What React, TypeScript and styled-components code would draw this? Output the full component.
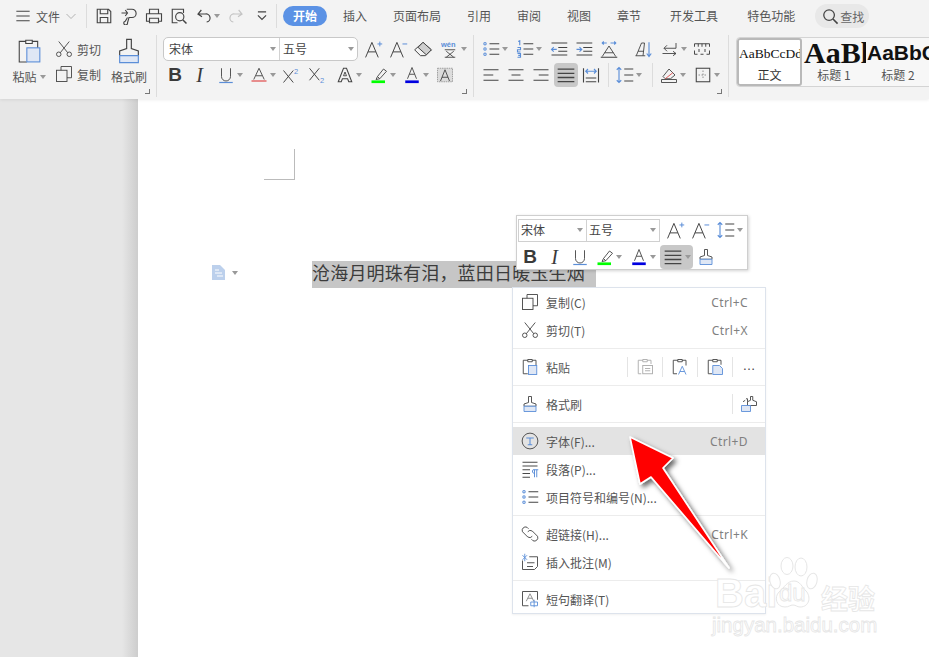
import React from "react";
import styled, { createGlobalStyle } from "styled-components";

const D = "#444444";
const B = "#5b8ed8";
const L = "#dfe7f5";
const UI = `"Noto Sans CJK SC", "Noto Sans", sans-serif`;

const Global = createGlobalStyle`
  html, body { margin: 0; padding: 0; background: #fff; }
  * { box-sizing: border-box; }
  body { font-family: ${UI}; font-size: 12px; color: #555; }
`;

const Page = styled.div`
  position: relative;
  width: 929px;
  height: 657px;
  overflow: hidden;
  display: flex;
  flex-direction: column;
`;
const Ribbon = styled.header`
  height: 99px;
  flex: none;
  background: #f3f3f3;
  position: relative;
  z-index: 1;
  box-shadow: 0 1px 3px rgba(0, 0, 0, 0.08);
`;
const TabBar = styled.nav`
  height: 32px;
  margin-bottom: 1px;
  display: flex;
  align-items: center;
  padding-left: 16px;
`;
const FileMenu = styled.div`
  display: flex;
  align-items: center;
  width: 70px;
  gap: 5px;
  margin-left: -1px;
  margin-right: 1px;
  color: #555;
`;
const VSep = styled.span<{ $h?: number; $ml?: number; $mr?: number }>`
  width: 1px;
  height: ${(p) => p.$h ?? 24}px;
  background: #dcdcdc;
  flex: none;
  margin-left: ${(p) => p.$ml ?? 0}px;
  margin-right: ${(p) => p.$mr ?? 0}px;
`;
const Tab = styled.span<{ $active?: boolean; $gap?: number }>`
  flex: none;
  line-height: 20px;
  height: 20px;
  padding: 0 ${(p) => (p.$active ? 10 : 0)}px;
  margin-right: ${(p) => p.$gap ?? 26}px;
  border-radius: 10px;
  background: ${(p) => (p.$active ? "#5b92e5" : "transparent")};
  color: ${(p) => (p.$active ? "#fff" : "#555")};
  font-weight: ${(p) => (p.$active ? 700 : 400)};
`;
const SearchPill = styled.span`
  display: flex;
  align-items: center;
  gap: 1px;
  height: 24px;
  width: 54px;
  padding-left: 7px;
  margin-left: -6px;
  border-radius: 12px;
  background: #e8e8e8;
  color: #666;
`;
const ToolArea = styled.div`
  height: 66px;
  display: flex;
`;
const Group = styled.section<{ $w: number; $pl?: number; $border?: boolean }>`
  position: relative;
  flex: none;
  width: ${(p) => p.$w}px;
  padding-left: ${(p) => p.$pl ?? 0}px;
  padding-top: 2px;
  margin-top: 2px;
  height: 62px;
  border-right: ${(p) => (p.$border === false ? "none" : "1px solid #dcdcdc")};
`;
const Launcher = styled.i`
  position: absolute;
  right: 6px;
  bottom: 3px;
  width: 5px;
  height: 5px;
  border-right: 1px solid #777;
  border-bottom: 1px solid #777;
`;
const ToolRow = styled.div<{ $mb?: number }>`
  display: flex;
  align-items: center;
  height: 24px;
  margin-bottom: ${(p) => p.$mb ?? 2}px;
`;
const Tool = styled.span<{ $w: number; $ml?: number; $active?: boolean }>`
  flex: none;
  display: flex;
  align-items: center;
  justify-content: center;
  gap: 2px;
  height: 24px;
  width: ${(p) => p.$w}px;
  margin-left: ${(p) => p.$ml ?? 0}px;
  border-radius: 4px;
  background: ${(p) => (p.$active ? "#c8c8c8" : "transparent")};
`;
const Caret = styled.i`
  flex: none;
  width: 0;
  height: 0;
  border-left: 3.5px solid transparent;
  border-right: 3.5px solid transparent;
  border-top: 4px solid #999;
`;
const Letter = styled.span<{ $italic?: boolean }>`
  display: block;
  width: 18px;
  text-align: center;
  font-family: ${(p) => (p.$italic ? `"Liberation Serif"` : `"Liberation Sans"`)}, sans-serif;
  color: #3a3a3a;
  font-size: ${(p) => (p.$italic ? 20 : 19)}px;
  line-height: 22px;
  font-weight: ${(p) => (p.$italic ? 400 : 700)};
  font-style: ${(p) => (p.$italic ? "italic" : "normal")};
`;
const ClipLayout = styled.div`
  display: flex;
  padding-left: 10px;
`;
const ClipColumn = styled.div<{ $w: number; $ml?: number }>`
  width: ${(p) => p.$w}px;
  margin-left: ${(p) => p.$ml ?? 0}px;
  height: 49px;
  display: flex;
  flex-direction: column;
  align-items: center;
  justify-content: space-between;
`;
const ClipLabel = styled.span`
  display: flex;
  align-items: center;
  gap: 3px;
  line-height: 18px;
  white-space: nowrap;
`;
const ClipRow = styled.div`
  display: flex;
  align-items: center;
  gap: 4px;
  height: 24px;
  white-space: nowrap;
`;
const SelectBox = styled.div`
  display: flex;
  width: 195px;
  height: 24px;
  background: #fff;
  border: 1px solid #c8c8c8;
  border-radius: 5px;
`;
const SelectPart = styled.div<{ $w: number; $border?: boolean; $pl?: number }>`
  flex: none;
  display: flex;
  align-items: center;
  justify-content: space-between;
  width: ${(p) => p.$w}px;
  padding: 0 3px 1px ${(p) => p.$pl ?? 5}px;
  color: #444;
  border-right: ${(p) => (p.$border ? "1px solid #d2d2d2" : "none")};
`;
const Gallery = styled.div`
  display: flex;
  width: 200px;
  height: 50px;
  background: #f7f7f7;
  border: 1px solid #d4d4d4;
  border-radius: 4px 0 0 4px;
  overflow: hidden;
`;
const StyleCard = styled.div<{ $active?: boolean }>`
  flex: none;
  width: ${(p) => (p.$active ? 65 : 64)}px;
  height: 100%;
  overflow: hidden;
  display: flex;
  flex-direction: column;
  align-items: ${(p) => (p.$active ? "flex-start" : "center")};
  border: ${(p) => (p.$active ? "2px solid #b9b9b9" : "none")};
  border-radius: 3px;
  background: ${(p) => (p.$active ? "#fff" : "transparent")};
`;
const Sample = styled.div<{ $kind: "normal" | "h1" | "h2" }>`
  height: ${(p) => (p.$kind === "normal" ? 26 : 28)}px;
  line-height: ${(p) => (p.$kind === "normal" ? 28 : 30)}px;
  white-space: nowrap;
  color: #111;
  align-self: flex-start;
  font-family: ${(p) => (p.$kind === "h2" ? `"Liberation Sans"` : `"Liberation Serif"`)}, serif;
  font-size: ${(p) => (p.$kind === "normal" ? 13.5 : p.$kind === "h1" ? 30 : 21)}px;
  font-weight: ${(p) => (p.$kind === "normal" ? 400 : 700)};
  padding-left: ${(p) => (p.$kind === "h1" ? 2 : p.$kind === "h2" ? 1 : 0)}px;
`;
const StyleName = styled.div<{ $active?: boolean }>`
  align-self: center;
  font-size: 12px;
  line-height: 18px;
  color: ${(p) => (p.$active ? "#333" : "#555")};
`;

const Workspace = styled.main`
  flex: 1;
  display: flex;
  min-height: 0;
`;
const Sidebar = styled.aside`
  width: 138px;
  flex: none;
  background: linear-gradient(to right, #e6e6e6 0, #e6e6e6 122px, #cdcdcd 138px);
`;
const Paper = styled.div`
  flex: 1;
  background: #fff;
  padding-top: 50px;
`;
const CropMark = styled.div`
  width: 31px;
  height: 31px;
  margin-left: 126px;
  border-right: 1px solid #bbb;
  border-bottom: 1px solid #bbb;
`;
const DocLine = styled.div`
  display: flex;
  align-items: center;
  margin-top: 81px;
  margin-left: 74px;
  height: 27px;
`;
const DocMark = styled.div`
  width: 100px;
  margin-top: -4px;
  display: flex;
  align-items: center;
  gap: 7px;
`;
const Selected = styled.span`
  width: 284px;
  height: 27px;
  line-height: 23px;
  background: #c6c6c6;
  color: #3c3c3c;
  font-size: 18px;
  letter-spacing: 0.2px;
  white-space: nowrap;
`;

const MiniBar = styled.div`
  position: absolute;
  left: 516px;
  top: 215px;
  width: 232px;
  height: 55px;
  background: #fff;
  border: 1px solid #cfcfcf;
  box-shadow: 1px 1px 3px rgba(0, 0, 0, 0.18);
  padding: 2px 1px;
  z-index: 2;
`;
const MiniSelects = styled.div`
  display: flex;
  width: 142px;
  height: 23px;
  border: 1px solid #d0d0d0;
  flex: none;
`;
const Menu = styled.div`
  position: absolute;
  left: 512px;
  top: 287px;
  width: 254px;
  height: 327px;
  background: #fff;
  border: 1px solid #dde3ec;
  box-shadow: 0 1px 2px rgba(0, 0, 0, 0.06);
  z-index: 2;
`;
const MenuRow = styled.div<{ $hover?: boolean }>`
  display: flex;
  align-items: center;
  height: 28px;
  padding: 0 17px 0 7px;
  background: ${(p) => (p.$hover ? "#e3e3e3" : "transparent")};
  color: #555;
  white-space: nowrap;
`;
const MenuIcon = styled.span`
  flex: none;
  width: 19px;
  margin-right: 7px;
  display: flex;
  justify-content: center;
`;
const MenuText = styled.span`
  flex: 1;
`;
const Shortcut = styled.span`
  color: #808080;
  letter-spacing: 0.4px;
  font-family: "Noto Sans", sans-serif;
`;
const MenuSep = styled.div<{ $h?: number }>`
  height: ${(p) => p.$h ?? 9}px;
  display: flex;
  align-items: center;
  &::before {
    content: "";
    flex: 1;
    height: 1px;
    background: #ececec;
  }
`;
const InlineCell = styled.span<{ $w?: number }>`
  flex: none;
  width: ${(p) => p.$w ?? 35}px;
  height: 20px;
  display: flex;
  align-items: center;
  justify-content: center;
  border-left: 1px solid #e4e4e4;
`;
const RightCells = styled.span`
  display: flex;
  margin-right: -17px;
`;
const Dots = styled.span`
  color: #444;
  font-family: "Liberation Sans", sans-serif;
  font-size: 13px;
  line-height: 12px;
  margin-top: -2px;
`;
const ArrowLayer = styled.svg`
  position: absolute;
  left: 610px;
  top: 425px;
  z-index: 3;
  overflow: visible;
`;
const Watermark = styled.div`
  position: absolute;
  left: 712px;
  top: 555px;
  width: 172px;
  z-index: 3;
`;
const MarkRow = styled.div`
  display: flex;
  align-items: flex-end;
  height: 60px;
`;
const outline = `
  color: #fff;
  -webkit-text-stroke: 0.8px #e6e6e6;
  font-family: "Liberation Sans", sans-serif;
  font-weight: 700;
  white-space: nowrap;
`;
const BaiText = styled.span`
  ${outline}
  font-size: 40px;
  line-height: 44px;
  margin-left: 3px;
  width: 54px;
  flex: none;
`;
const Paw = styled.div`
  position: relative;
  width: 50px;
  height: 56px;
  margin-bottom: 2px;
  flex: none;
`;
const DuText = styled.span`
  ${outline}
  position: absolute;
  left: 10px;
  top: 23px;
  font-size: 24px;
  line-height: 26px;
  font-weight: 400;
`;
const JingText = styled.span`
  ${outline}
  font-family: ${UI};
  font-size: 27px;
  line-height: 34px;
  margin-left: 2px;
`;
const UrlText = styled.div`
  ${outline}
  font-size: 20.5px;
  line-height: 24px;
  margin-top: -2px;
  font-weight: 400;
`;

const Svg = styled.svg`
  flex: none;
  display: block;
`;
type IP = { s?: number; sw?: number; children: React.ReactNode };
const Ico = ({ s = 18, sw = 1.2, children }: IP) => (
  <Svg width={s} height={s} viewBox="0 0 24 24" fill="none" stroke={D} strokeWidth={sw}>
    {children}
  </Svg>
);

const A = <path d="M2 22 10 3l8 19M5 15h10" />;
const Lines = ({ d }: { d: string }) => <path d={d} strokeWidth={1.6} />;

const I = {
  menu: <Ico s={16}><path d="M2 5h20M2 12h20M2 19h20" strokeWidth={1.6} /></Ico>,
  chevron: <Ico s={12}><path d="M3 8l9 9 9-9" stroke="#aaa" strokeWidth={1.8} /></Ico>,
  save: <Ico s={18}><path d="M3 3h15l3 3v15H3zM7 3v6h10V3M7 21v-7h10v7" strokeWidth={1.5} /></Ico>,
  exportP: <Ico s={18}><path d="M2 8h8M7 4l3 4-3 4M9 3h7a5 5 0 0 1 0 11h-4l-2 7a2.5 2.5 0 1 1-3-2l3-5" strokeWidth={1.5} /></Ico>,
  print: <Ico s={18}><path d="M6 9V3h12v6M6 19H2V9h20v10h-4M6 15h12v6H6z" strokeWidth={1.5} /></Ico>,
  preview: <Ico s={18}><path d="M10 21H3V3h15v5" strokeWidth={1.5} /><circle cx="13" cy="13" r="5.5" strokeWidth={1.5} /><path d="M17 17l5 5" strokeWidth={2} /></Ico>,
  undo: <Ico s={16}><path d="M8 3 3 9l6 4M3 9h11a6 6 0 0 1 2 12" strokeWidth={1.8} /></Ico>,
  redo: <Ico s={16}><path d="M16 3l5 6-6 4M21 9H10a6 6 0 0 0-2 12" stroke="#c4c4c4" strokeWidth={1.8} /></Ico>,
  more: <Ico s={14}><path d="M5 5h14M5 11l7 7 7-7" strokeWidth={2} /></Ico>,
  search: <Ico s={17}><circle cx="10" cy="10" r="7.5" strokeWidth={1.8} /><path d="M15.5 15.5 22 22" strokeWidth={2.2} /></Ico>,
  paste: <Ico s={26} sw={1}><path d="M9 3h6v3H9zM9 4H3v19h7M15 4h5v7" /><rect x="10" y="10" width="12" height="13" fill={L} stroke={B} /></Ico>,
  pasteS: <Ico s={18}><path d="M9 2h6v3H9zM9 3H3v18h6M15 3h5v7" /><rect x="10" y="10" width="11" height="12" fill={L} stroke={B} /></Ico>,
  cut: <Ico s={18}><circle cx="5" cy="19" r="3" /><circle cx="19" cy="19" r="3" /><path d="M7 17 19 2M17 17 5 2" /></Ico>,
  copy: <Ico s={18}><path d="M8 7V2h14v15h-6" /><rect x="2" y="7" width="14" height="15" /></Ico>,
  brush: <Ico s={28} sw={1}><path d="M10 2h4v8l6 2v4H4v-4l6-2z" /><path d="M4 16h16v6H4z" fill={L} stroke={B} /></Ico>,
  brushS: <Ico s={18}><path d="M10 2h4v8l6 2v3H4v-3l6-2z" /><path d="M4 15h16v7H4z" fill={L} stroke={B} /></Ico>,
  brush2: <Ico s={18}><path d="M14 2h3v5l5 2v5H10V9l4-2z" /><path d="M8 5h2v4M4 9l3-2" /><path d="M2 14h12v8H2z" fill={L} stroke={B} /></Ico>,
  aPlus: <Ico s={19} sw={1.25}>{A}<path d="M17 5h6M20 2v6" stroke={B} /></Ico>,
  aMinus: <Ico s={19} sw={1.25}>{A}<path d="M17 5h6" stroke={B} /></Ico>,
  eraser: <Ico s={20}><path d="M2 13 12 4l10 9-7 7H9z" /><path d="M12 4l10 9-6 6-10-9z" fill="#cfcfcf" /></Ico>,
  wen: (
    <Svg width="18" height="18" viewBox="0 0 24 24" fill="none">
      <text x="0" y="9" fontSize="10" fontFamily="Liberation Sans" fill={B} fontWeight="700">wén</text>
      <path d="M5 13h14M7 15l10 8M17 15 7 23M5 23h14" stroke={D} strokeWidth="1.2" />
    </Svg>
  ),
  under: <Ico><path d="M6 3v11a6 6 0 0 0 12 0V3" /><path d="M3 22h18" stroke={B} strokeWidth={1.6} /></Ico>,
  fontRed: <Ico><path d="M5 18 12 3l7 15M8 13h8" /><path d="M2 20h20" stroke="#e04848" strokeWidth={1.6} /></Ico>,
  sup: (
    <Svg width="20" height="18" viewBox="0 0 26 24" fill="none">
      <path d="M3 6l13 16M16 6 3 22" stroke={D} strokeWidth="1.3" />
      <text x="17" y="10" fontSize="10" fontFamily="Liberation Sans" fill={B}>2</text>
    </Svg>
  ),
  sub: (
    <Svg width="20" height="18" viewBox="0 0 26 24" fill="none">
      <path d="M3 3l13 16M16 3 3 19" stroke={D} strokeWidth="1.3" />
      <text x="17" y="23" fontSize="10" fontFamily="Liberation Sans" fill={B}>2</text>
    </Svg>
  ),
  outlineA: <Ico><path d="M3 21 10 3h4l7 18h-4l-1.5-4h-7L7 21z" strokeWidth={1.4} /><path d="M10 13h4l-2-5z" /></Ico>,
  high: <Ico><path d="M10 14l8-10 4 3-9 10zM10 14l-2 4 5-1" /><path d="M2 21h18" stroke="#00ff00" strokeWidth={3.6} /></Ico>,
  color: <Ico><path d="M6 17 12 2l6 15M8.5 11h7" /><path d="M3 21h18" stroke="#0000e0" strokeWidth={3.6} /></Ico>,
  shade: <Ico><rect x="2" y="3" width="20" height="18" fill="#dcdcdc" stroke="#999" strokeDasharray="2 1" /><path d="M6 20 12 5l6 15M8 15h8" /></Ico>,
  bullets: <Ico><path d="M10 5h13M10 12h13M10 19h13" strokeWidth={1.5} /><g stroke={B} strokeWidth={1.4}><circle cx="4" cy="5" r="1.6" /><circle cx="4" cy="12" r="1.6" /><circle cx="4" cy="19" r="1.6" /></g></Ico>,
  numbers: <Ico><path d="M10 5h13M10 12h13M10 19h13" strokeWidth={1.5} /><g stroke={B} strokeWidth={1.5}><path d="M3 2l2-1v6M2 10h4v3H2v3h4M2 18h4v5H2M3 20.5h3" /></g></Ico>,
  outdent: <Ico><path d="M2 4h21M11 10h12M11 15h12M2 20h21" strokeWidth={1.5} /><path d="M9 12.5H2M5 9.5l-3 3 3 3" stroke={B} strokeWidth={1.5} /></Ico>,
  indent: <Ico><path d="M2 4h21M11 10h12M11 15h12M2 20h21" strokeWidth={1.5} /><path d="M2 12.5h7M6 9.5l3 3-3 3" stroke={B} strokeWidth={1.5} /></Ico>,
  ltr: <Ico><path d="M3 4h6M5 2 3 4l2 2M14 4h7M19 2l2 2-2 2" stroke={B} strokeWidth={1.5} /><path d="M3 22l9-14 9 14M6 17h12" /><path d="M1 23h22" strokeWidth={1.4} /></Ico>,
  sort: <Ico><path d="M3 21 10 4h4l-2 17M5.5 15H13M2 21h13" /><path d="M20 3v19M17 18l3 4 3-4" stroke={B} strokeWidth={1.5} /></Ico>,
  wrap: <Ico><path d="M20 4v7H4M8 7l-4 4 4 4" /><path d="M2 18h18M16 15l4 3-4 3" /></Ico>,
  ruler: <Ico><path d="M2 5h20M2 19h4M10 19h4M18 19h4M2 5v4M22 5v4M2 14v5M22 14v5M7 5v4M12 5v4M17 5v4M8 12v4M16 12v4" strokeWidth={1.3} /></Ico>,
  alignL: <Ico><Lines d="M2 5h20M2 12h13M2 19h20" /></Ico>,
  alignC: <Ico><Lines d="M2 5h20M6 12h12M2 19h20" /></Ico>,
  alignR: <Ico><Lines d="M2 5h20M9 12h13M2 19h20" /></Ico>,
  justify: <Ico s={20}><Lines d="M2 5h20M2 10h20M2 15h20M2 20h20" /></Ico>,
  distrib: <Ico><path d="M2 3v19M22 3v19M5 16h14M5 21h14" strokeWidth={1.5} /><path d="M5 7h14M8 4 5 7l3 3M16 4l3 3-3 3" stroke={B} strokeWidth={1.5} /></Ico>,
  spacing: <Ico><path d="M4 2v20M1 5l3-3 3 3M1 19l3 3 3-3" stroke={B} strokeWidth={1.5} /><path d="M11 4h12M11 12h12M11 20h12" strokeWidth={1.5} /></Ico>,
  fill: <Ico><path d="M4 14l8-10 8 8-6 5H7z" /><path d="M7 17 17 9" stroke="#e04848" /><path d="M2 18h20v4H2z" /></Ico>,
  border: <Ico><rect x="3" y="3" width="18" height="18" strokeWidth={1.4} /><path d="M12 6v12M6 12h12" strokeDasharray="2 2" stroke="#888" /></Ico>,
  docMark: (
    <Svg width="13" height="15" viewBox="0 0 13 15">
      <path d="M0 0h8l5 5v10H0z" fill="#bcd0ec" />
      <path d="M3 5h4M3 8h7M5 11h6" stroke="#fff" strokeWidth="1" />
    </Svg>
  ),
  fontT: <Ico><circle cx="12" cy="12" r="10.5" /><path d="M7 8h10M12 8v9M9 17h6" stroke={B} strokeWidth={1.4} /></Ico>,
  para: <Ico><path d="M2 3h20M2 8h20M2 13h10M2 18h10M2 23h10" strokeWidth={1.3} /><path d="M18 13v10M21 13v10M18 18a3 3 0 0 1-2-5h7" stroke={B} strokeWidth={1.3} /></Ico>,
  link: <Ico><path d="M10 5l-2-2a4.5 4.5 0 0 0-6 6l7 7a4.5 4.5 0 0 0 6-1" /><path d="M14 19l2 2a4.5 4.5 0 0 0 6-6l-7-7a4.5 4.5 0 0 0-6 1" /></Ico>,
  note: <Ico><path d="M2 10v12h16l4-4V5H11" /><path d="M8 13h10M8 18h8" /><path d="M2 3l6 6M8 3 2 9M5 1v10" stroke={B} /></Ico>,
  trans: <Ico><path d="M10 21H2V2h20v11" /><path d="M7 15l5-10 5 10M9 11h6" stroke="#888" /><path d="M13 16h9v5h-9zM17.5 13v10" stroke={B} /></Ico>,
  pasteText: <Ico><path d="M9 2h6v3H9zM9 3H3v18h4M15 3h5v5" stroke="#aaa" /><rect x="9" y="10" width="13" height="11" stroke="#aaa" /><path d="M12 14h7M12 17h7" stroke="#aaa" /></Ico>,
  pasteA: <Ico><path d="M9 2h6v3H9zM9 3H3v18h5M15 3h5v7" /><path d="M10 22l5-11 5 11M12 18h6" stroke={B} /></Ico>,
  pasteDoc: <Ico><path d="M9 2h6v3H9zM9 3H3v18h5M15 3h5v6" /><path d="M9 10h9l4 4v8H9z" fill={L} stroke={B} /></Ico>,
};

const tabs: { label: string; gap?: number }[] = [
  { label: "插入" },
  { label: "页面布局" },
  { label: "引用" },
  { label: "审阅" },
  { label: "视图" },
  { label: "章节", gap: 29 },
  { label: "开发工具", gap: 29 },
  { label: "特色功能" },
];

export default function App() {
  return (
    <Page>
      <Global />
      <Ribbon>
        <TabBar>
          <FileMenu>{I.menu}<span>文件</span>{I.chevron}</FileMenu>
          <VSep />
          <Tool $w={25} $ml={4}>{I.save}</Tool>
          <Tool $w={25}>{I.exportP}</Tool>
          <Tool $w={25}>{I.print}</Tool>
          <Tool $w={25}>{I.preview}</Tool>
          <Tool $w={33}>{I.undo}<Caret /></Tool>
          <Tool $w={24}>{I.redo}</Tool>
          <Tool $w={28}>{I.more}</Tool>
          <VSep $mr={6} />
          <Tab $active $gap={16}>开始</Tab>
          {tabs.map((t) => <Tab key={t.label} $gap={t.gap}>{t.label}</Tab>)}
          <SearchPill>{I.search}<span>查找</span></SearchPill>
        </TabBar>
        <ToolArea>
          <Group $w={157}>
            <ClipLayout>
              <ClipColumn $w={38}>
                {I.paste}
                <ClipLabel>粘贴<Caret /></ClipLabel>
              </ClipColumn>
              <ClipColumn $w={46} $ml={7}>
                <ClipRow>{I.cut}<span>剪切</span></ClipRow>
                <ClipRow>{I.copy}<span>复制</span></ClipRow>
              </ClipColumn>
              <ClipColumn $w={38} $ml={9}>
                {I.brush}
                <ClipLabel>格式刷</ClipLabel>
              </ClipColumn>
            </ClipLayout>
            <Launcher />
          </Group>
          <Group $w={317} $pl={6}>
            <ToolRow>
              <SelectBox>
                <SelectPart $w={116} $border>宋体<Caret /></SelectPart>
                <SelectPart $w={77} $pl={3}>五号<Caret /></SelectPart>
              </SelectBox>
              <Tool $w={30}>{I.aPlus}</Tool>
              <Tool $w={20}>{I.aMinus}</Tool>
              <Tool $w={30}>{I.eraser}</Tool>
              <Tool $w={31}>{I.wen}<Caret /></Tool>
            </ToolRow>
            <ToolRow>
              <Tool $w={24}><Letter>B</Letter></Tool>
              <Tool $w={25}><Letter $italic>I</Letter></Tool>
              <Tool $w={35}>{I.under}<Caret /></Tool>
              <Tool $w={31}>{I.fontRed}<Caret /></Tool>
              <Tool $w={26}>{I.sup}</Tool>
              <Tool $w={26}>{I.sub}</Tool>
              <Tool $w={37}>{I.outlineA}<Caret /></Tool>
              <Tool $w={31}>{I.high}<Caret /></Tool>
              <Tool $w={35}>{I.color}<Caret /></Tool>
              <Tool $w={24}>{I.shade}</Tool>
            </ToolRow>
            <Launcher />
          </Group>
          <Group $w={255} $pl={7}>
            <ToolRow>
              <Tool $w={27}>{I.bullets}<Caret /></Tool>
              <Tool $w={41}>{I.numbers}<Caret /></Tool>
              <Tool $w={20}>{I.outdent}</Tool>
              <Tool $w={30}>{I.indent}</Tool>
              <Tool $w={20}>{I.ltr}</Tool>
              <Tool $w={24} $ml={12}>{I.sort}</Tool>
              <Tool $w={37}>{I.wrap}<Caret /></Tool>
              <Tool $w={20}>{I.ruler}</Tool>
            </ToolRow>
            <ToolRow>
              <Tool $w={20}>{I.alignL}</Tool>
              <Tool $w={30}>{I.alignC}</Tool>
              <Tool $w={20}>{I.alignR}</Tool>
              <Tool $w={24} $ml={3} $active>{I.justify}</Tool>
              <Tool $w={26}>{I.distrib}</Tool>
              <VSep $ml={4} />
              <Tool $w={39}>{I.spacing}<Caret /></Tool>
              <VSep $ml={4} />
              <Tool $w={39}>{I.fill}<Caret /></Tool>
              <Tool $w={29}>{I.border}<Caret /></Tool>
            </ToolRow>
            <Launcher />
          </Group>
          <Group $w={200} $pl={7} $border={false}>
            <Gallery>
              <StyleCard $active>
                <Sample $kind="normal">AaBbCcDd</Sample>
                <StyleName $active>正文</StyleName>
              </StyleCard>
              <StyleCard>
                <Sample $kind="h1">AaBl</Sample>
                <StyleName>标题 1</StyleName>
              </StyleCard>
              <StyleCard>
                <Sample $kind="h2">AaBbC</Sample>
                <StyleName>标题 2</StyleName>
              </StyleCard>
            </Gallery>
          </Group>
        </ToolArea>
      </Ribbon>
      <Workspace>
        <Sidebar />
        <Paper>
          <CropMark />
          <DocLine>
            <DocMark>{I.docMark}<Caret /></DocMark>
            <Selected>沧海月明珠有泪，蓝田日暖玉生烟</Selected>
          </DocLine>
        </Paper>
      </Workspace>

      <MiniBar>
        <ToolRow $mb={3}>
          <MiniSelects>
            <SelectPart $w={68} $border $pl={2}>宋体<Caret /></SelectPart>
            <SelectPart $w={72} $pl={2}>五号<Caret /></SelectPart>
          </MiniSelects>
          <Tool $w={30}>{I.aPlus}</Tool>
          <Tool $w={20}>{I.aMinus}</Tool>
          <Tool $w={34} $ml={3}>{I.spacing}<Caret /></Tool>
        </ToolRow>
        <ToolRow>
          <Tool $w={24}><Letter>B</Letter></Tool>
          <Tool $w={25}><Letter $italic>I</Letter></Tool>
          <Tool $w={25}>{I.under}</Tool>
          <Tool $w={34}>{I.high}<Caret /></Tool>
          <Tool $w={34}>{I.color}<Caret /></Tool>
          <Tool $w={33} $active>{I.justify}<Caret /></Tool>
          <Tool $w={26}>{I.brushS}</Tool>
        </ToolRow>
      </MiniBar>

      <Menu>
        <MenuRow><MenuIcon>{I.copy}</MenuIcon><MenuText>复制(C)</MenuText><Shortcut>Ctrl+C</Shortcut></MenuRow>
        <MenuRow><MenuIcon>{I.cut}</MenuIcon><MenuText>剪切(T)</MenuText><Shortcut>Ctrl+X</Shortcut></MenuRow>
        <MenuSep />
        <MenuRow>
          <MenuIcon>{I.pasteS}</MenuIcon><MenuText>粘贴</MenuText>
          <RightCells>
            <InlineCell>{I.pasteText}</InlineCell>
            <InlineCell>{I.pasteA}</InlineCell>
            <InlineCell>{I.pasteDoc}</InlineCell>
            <InlineCell $w={33}><Dots>…</Dots></InlineCell>
          </RightCells>
        </MenuRow>
        <MenuSep />
        <MenuRow>
          <MenuIcon>{I.brushS}</MenuIcon><MenuText>格式刷</MenuText>
          <RightCells><InlineCell $w={33}>{I.brush2}</InlineCell></RightCells>
        </MenuRow>
        <MenuSep />
        <MenuRow $hover><MenuIcon>{I.fontT}</MenuIcon><MenuText>字体(F)...</MenuText><Shortcut>Ctrl+D</Shortcut></MenuRow>
        <MenuRow><MenuIcon>{I.para}</MenuIcon><MenuText>段落(P)...</MenuText></MenuRow>
        <MenuRow><MenuIcon>{I.bullets}</MenuIcon><MenuText>项目符号和编号(N)...</MenuText></MenuRow>
        <MenuSep />
        <MenuRow><MenuIcon>{I.link}</MenuIcon><MenuText>超链接(H)...</MenuText><Shortcut>Ctrl+K</Shortcut></MenuRow>
        <MenuRow><MenuIcon>{I.note}</MenuIcon><MenuText>插入批注(M)</MenuText></MenuRow>
        <MenuSep />
        <MenuRow><MenuIcon>{I.trans}</MenuIcon><MenuText>短句翻译(T)</MenuText></MenuRow>
      </Menu>

      <ArrowLayer width="130" height="160" viewBox="0 0 130 160">
        <defs>
          <filter id="arrowShadow" x="-30%" y="-30%" width="170%" height="170%">
            <feDropShadow dx="3" dy="3" stdDeviation="2.5" floodColor="#000" floodOpacity="0.6" />
          </filter>
        </defs>
        <polygon
          points="20,12 63,33 53,43 119,143 41,52 30,59"
          fill="#ff0000"
          stroke="#fff"
          strokeWidth="1.6"
          strokeLinejoin="round"
          filter="url(#arrowShadow)"
        />
      </ArrowLayer>

      <Watermark>
        <MarkRow>
          <BaiText>Bai</BaiText>
          <Paw>
            <svg width="50" height="56" viewBox="0 0 50 56" fill="#fff" stroke="#e6e6e6" strokeWidth="1">
              <ellipse cx="6" cy="24" rx="5" ry="8" transform="rotate(-15 6 24)" />
              <ellipse cx="18" cy="9" rx="6" ry="8.5" />
              <ellipse cx="32" cy="10" rx="6" ry="9" />
              <ellipse cx="43" cy="24" rx="5" ry="8" transform="rotate(15 43 24)" />
              <path d="M25 24c6 0 8 6 12 10 5 5 4 16-6 16-3 0-4-2-7-2s-4 2-8 2C7 50 5 40 10 35c5-4 8-11 15-11z" />
            </svg>
            <DuText>du</DuText>
          </Paw>
          <JingText>经验</JingText>
        </MarkRow>
        <UrlText>jingyan.baidu.com</UrlText>
      </Watermark>
    </Page>
  );
}
